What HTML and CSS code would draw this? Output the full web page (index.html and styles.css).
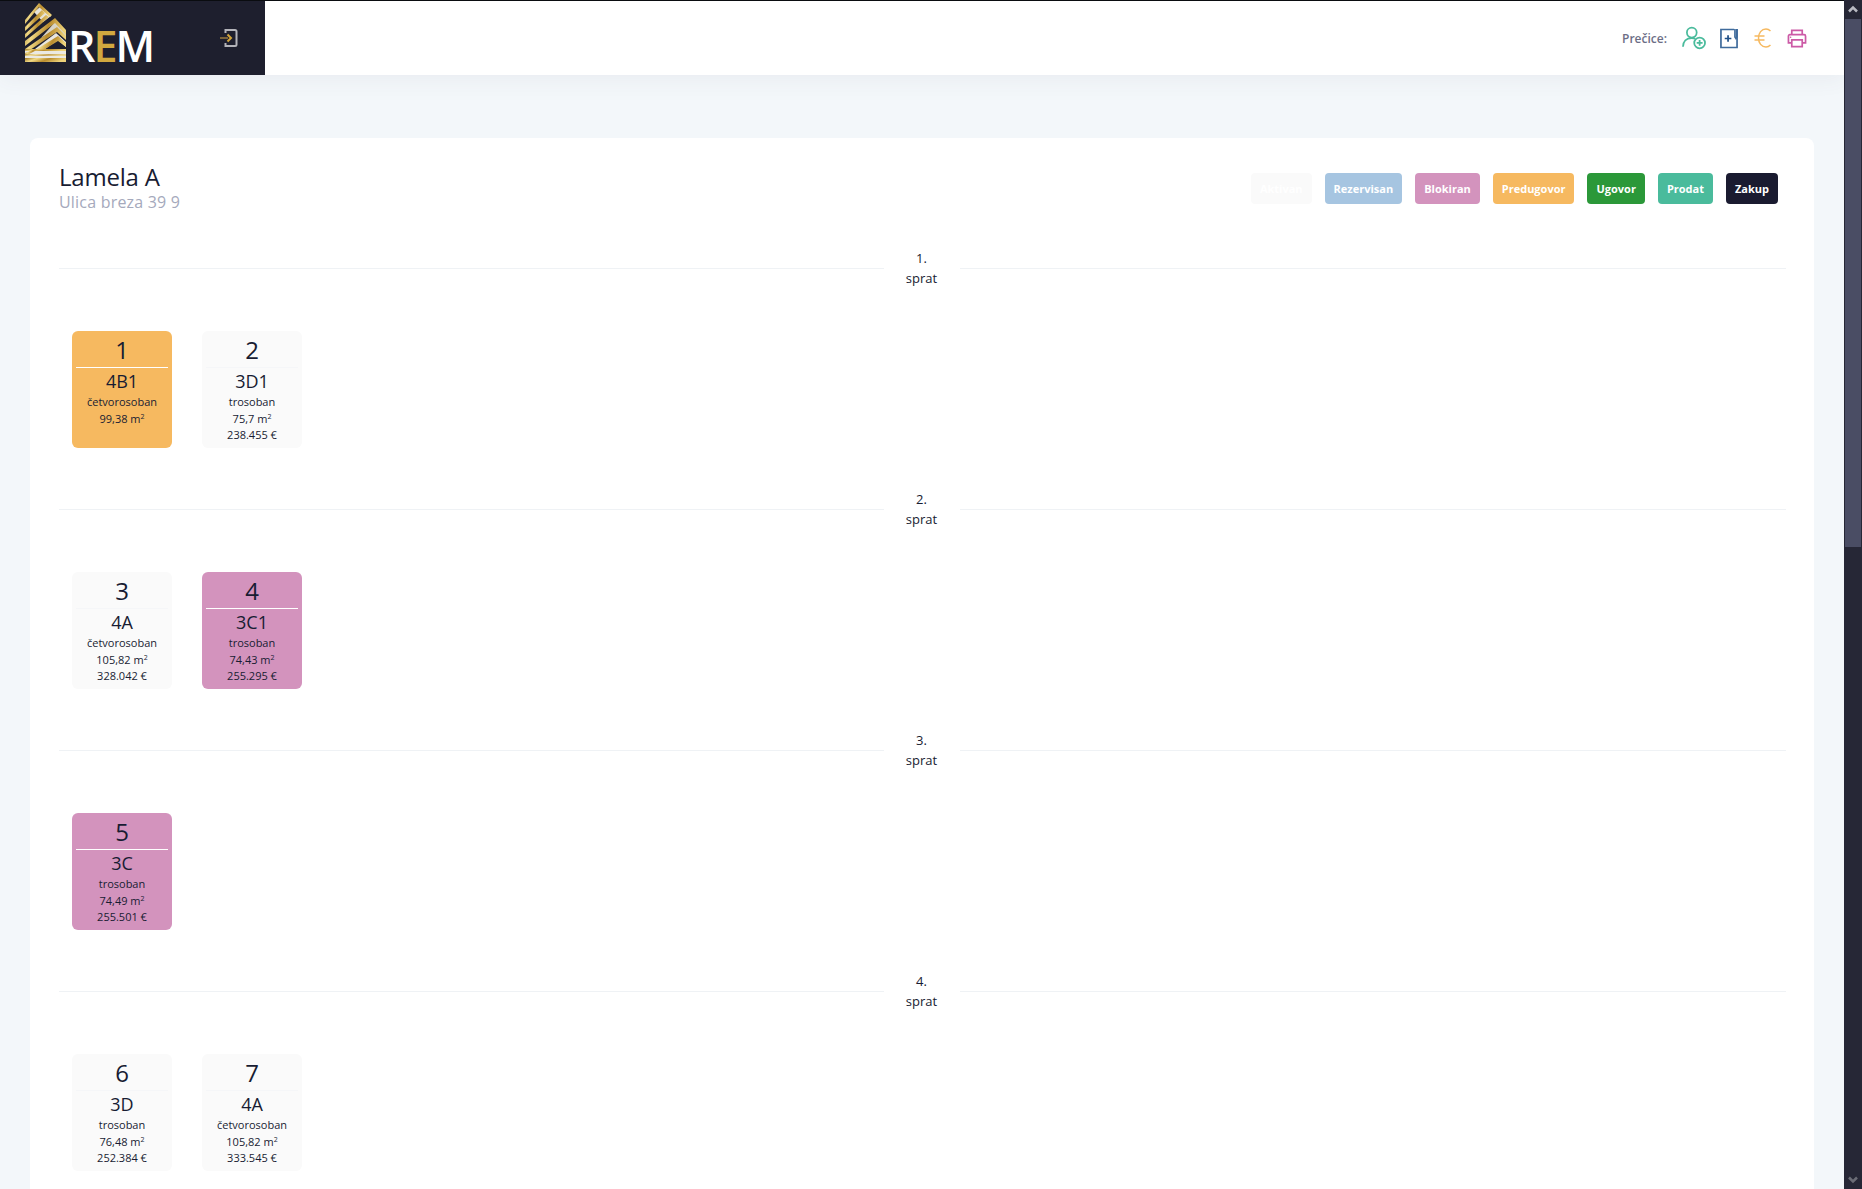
FILE: index.html
```html
<!DOCTYPE html>
<html lang="sr">
<head>
<meta charset="utf-8">
<title>REM</title>
<link rel="stylesheet" href="styles.css">
</head>
<body>
<div class="app">
  <div class="page">
    <header class="topbar">
      <div class="brand">
        <svg class="logo-mark" viewBox="0 0 41 59" width="41" height="59" aria-hidden="true">
          <defs>
            <linearGradient id="gold" x1="0" y1="0" x2="1" y2="0.25">
              <stop offset="0" stop-color="#9a7420"/>
              <stop offset="0.3" stop-color="#f2da86"/>
              <stop offset="0.6" stop-color="#b98c2e"/>
              <stop offset="1" stop-color="#eed27a"/>
            </linearGradient>
          </defs>
          <path d="M15 4 26 13 18 19 9 9z" fill="#e6e3da"/>
          <path d="M30 19 41 30v6L31 26 16 35z" fill="#d8d4c6"/>
          <path d="M31 30 41 39v5L33 37 20 46H10z" fill="#e9e7e0"/>
          <path d="M0 48H41V55H0z" fill="#ebe9e3"/>
          <g fill="url(#gold)">
            <path d="M0 17 14 0 27 12 25 14 14 4 0 21z"/>
            <path d="M0 24 17 7 20 10 0 28z"/>
            <path d="M0 31 21 12 24 14 0 35z"/>
            <path d="M0 38 30 15 41 27V32L30 20 0 43z"/>
            <path d="M0 46 32 24 41 33V37L32 29 5 47H0z"/>
            <path d="M12 46 33 33 41 40V44L33 38 20 46z"/>
            <path d="M0 46H41V48H0z"/>
            <path d="M0 50 10 46H14L0 53z"/>
            <path d="M0 51H41V53H0z" opacity=".75"/>
            <path d="M0 55H41V59H0z"/>
          </g>
        </svg>
        <div class="wordmark">R<span class="wordmark-gold">E</span>M</div>
        <svg class="login-icon" viewBox="0 0 18 18" width="18" height="18" aria-hidden="true">
          <path d="M5.500 4V1H15a1.500 1.500 0 0 1 1.500 1.500v13A1.500 1.500 0 0 1 15 17H5.500v-3" fill="none" stroke="#b4b4ba" stroke-width="2"/>
          <path d="M0 9h8" fill="none" stroke="#7b6238" stroke-width="2"/>
          <path d="M7.500 5.500 11 9 7.500 12.500" fill="none" stroke="#d4a53a" stroke-width="2"/>
        </svg>
      </div>
      <div class="shortcuts">
        <span class="shortcuts-label">Prečice:</span>
        <svg class="shortcut sc-user" viewBox="0 0 24.500 24" width="24" height="24" aria-hidden="true">
          <g fill="none" stroke="#4abb9c" stroke-width="1.800">
            <circle cx="10" cy="6.500" r="5"/>
            <path d="M1 21c0-5.500 3.500-9 9-9 1.500 0 2.500.3 3.500.8"/>
            <circle cx="18" cy="17" r="5.500"/>
            <path d="M18 14v6M15 17h6"/>
          </g>
        </svg>
        <svg class="shortcut sc-note" viewBox="0 0 19 22" width="18" height="21" aria-hidden="true">
          <g fill="none" stroke="#3f6b9c" stroke-width="1.800">
            <path d="M15 1.500H1v19h17V1"/>
            <path d="M15.800 1v8.500l1 1.500 1-1.500V1"/>
          </g>
          <path d="M8.500 7.500v7M5 11h7" fill="none" stroke="#1f4f86" stroke-width="1.800"/>
        </svg>
        <svg class="shortcut sc-euro" viewBox="0 0 17 20" width="17" height="20" aria-hidden="true">
          <g fill="none" stroke="#f6b960" stroke-width="1.500">
            <path d="M16.500 3C15 1.500 13.500 1 12 1 7.500 1 4.500 5 4.500 10s3 9 7.500 9c1.500 0 3-.5 4.500-2"/>
            <path d="M0.500 8h10M0.500 12h10"/>
          </g>
        </svg>
        <svg class="shortcut" viewBox="0 0 21 20" width="20" height="19" aria-hidden="true">
          <g fill="none" stroke="#cc5aa6" stroke-width="1.800">
            <path d="M5 6V1.500h11V6"/>
            <path d="M5 14.500H1.500V7.500a1.500 1.500 0 0 1 1.500-1.500h15a1.500 1.500 0 0 1 1.500 1.500v7H16"/>
            <path d="M5 11.500h11v7H5z"/>
          </g>
          <circle cx="3.800" cy="8.800" r=".8" fill="#cc5aa6"/>
        </svg>
      </div>
    </header>

    <main class="content">
      <section class="panel">
        <div class="panel-head">
          <div class="panel-title">
            <h1>Lamela A</h1>
            <p>Ulica breza 39 9</p>
          </div>
          <div class="legend">
            <span class="tag s-active">Aktivan</span>
            <span class="tag s-reserved">Rezervisan</span>
            <span class="tag s-blocked">Blokiran</span>
            <span class="tag s-pre">Predugovor</span>
            <span class="tag s-contract">Ugovor</span>
            <span class="tag s-sold">Prodat</span>
            <span class="tag s-lease">Zakup</span>
          </div>
        </div>

        <div class="floor">
          <div class="floor-sep"><span>1. sprat</span></div>
          <div class="units">
            <div class="unit s-pre"><div class="unit-no">1</div><div class="unit-code">4B1</div><div class="unit-line">četvorosoban</div><div class="unit-line">99,38 m<sup>2</sup></div></div>
            <div class="unit s-active"><div class="unit-no">2</div><div class="unit-code">3D1</div><div class="unit-line">trosoban</div><div class="unit-line">75,7 m<sup>2</sup></div><div class="unit-line">238.455 €</div></div>
          </div>
        </div>

        <div class="floor">
          <div class="floor-sep"><span>2. sprat</span></div>
          <div class="units">
            <div class="unit s-active"><div class="unit-no">3</div><div class="unit-code">4A</div><div class="unit-line">četvorosoban</div><div class="unit-line">105,82 m<sup>2</sup></div><div class="unit-line">328.042 €</div></div>
            <div class="unit s-blocked"><div class="unit-no">4</div><div class="unit-code">3C1</div><div class="unit-line">trosoban</div><div class="unit-line">74,43 m<sup>2</sup></div><div class="unit-line">255.295 €</div></div>
          </div>
        </div>

        <div class="floor">
          <div class="floor-sep"><span>3. sprat</span></div>
          <div class="units">
            <div class="unit s-blocked"><div class="unit-no">5</div><div class="unit-code">3C</div><div class="unit-line">trosoban</div><div class="unit-line">74,49 m<sup>2</sup></div><div class="unit-line">255.501 €</div></div>
          </div>
        </div>

        <div class="floor">
          <div class="floor-sep"><span>4. sprat</span></div>
          <div class="units">
            <div class="unit s-active"><div class="unit-no">6</div><div class="unit-code">3D</div><div class="unit-line">trosoban</div><div class="unit-line">76,48 m<sup>2</sup></div><div class="unit-line">252.384 €</div></div>
            <div class="unit s-active"><div class="unit-no">7</div><div class="unit-code">4A</div><div class="unit-line">četvorosoban</div><div class="unit-line">105,82 m<sup>2</sup></div><div class="unit-line">333.545 €</div></div>
          </div>
        </div>
      </section>
    </main>
  </div>

  <aside class="scrollbar" aria-hidden="true">
    <svg class="scroll-arrow" viewBox="0 0 18 19" width="18" height="19"><path d="M5 11.500 9 7.500l4 4" fill="none" stroke="#b9bac2" stroke-width="2.500"/></svg>
    <div class="scroll-track"><div class="scroll-thumb"></div></div>
    <svg class="scroll-arrow" viewBox="0 0 18 19" width="18" height="19"><path d="M5 7.500 9 11.500l4-4" fill="none" stroke="#6b6c76" stroke-width="2.500"/></svg>
  </aside>
</div>
</body>
</html>
```

FILE: styles.css
```css
* { box-sizing: border-box; }

html, body {
  margin: 0;
  height: 100%;
  overflow: hidden;
}

body {
  font-family: "Open Sans", "Liberation Sans", sans-serif;
  font-size: 13px;
  color: #181c32;
  background: #f3f7fa;
}

.app {
  display: flex;
  height: 100vh;
}

.page {
  flex: 1;
  min-width: 0;
  overflow: hidden;
  border-top: 1px solid #0a0c10;
}

/* top bar */
.topbar {
  display: flex;
  justify-content: space-between;
  align-items: center;
  height: 74px;
  background: #fff;
  box-shadow: 0 5px 20px rgba(82, 63, 105, 0.06);
}

.brand {
  display: flex;
  align-items: center;
  width: 265px;
  height: 100%;
  padding-left: 25px;
  background: #1e1f2e;
}

.logo-mark {
  flex: none;
  align-self: flex-start;
  margin-top: 2px;
}

.wordmark {
  margin: 14px 0 0 2px;
  font-size: 43px;
  font-weight: 600;
  line-height: 1;
  letter-spacing: -2px;
  color: #fff;
}

.wordmark-gold { color: #d2a83f; }

.login-icon {
  margin-left: 67px;
  flex: none;
}

.shortcuts {
  display: flex;
  align-items: center;
  padding-right: 37px;
}

.shortcuts-label {
  margin-right: 15px;
  font-size: 12px;
  font-weight: 600;
  color: #6c6e86;
}

.shortcut { flex: none; }
.sc-user { margin-right: 14px; }
.sc-note { margin-right: 16px; }
.sc-euro { margin-right: 16px; }

/* content */
.content {
  padding: 63px 30px 0;
}

.panel {
  padding: 24px 28px 0 29px;
  background: #fff;
  border-radius: 8px;
}

.panel-head {
  display: flex;
  justify-content: space-between;
  align-items: flex-start;
  height: 86px;
  padding-right: 8px;
}

.panel-title h1 {
  margin: 0;
  font-size: 24px;
  font-weight: 500;
  line-height: 29px;
  letter-spacing: -0.200px;
  color: #181c32;
}

.panel-title p {
  margin: 2px 0 0;
  font-size: 16px;
  font-weight: 500;
  line-height: 19px;
  letter-spacing: 0.200px;
  color: #a5a9bc;
}

.legend {
  display: flex;
  gap: 13px;
  margin-top: 11px;
}

.tag {
  padding: 0 9px;
  font-size: 11px;
  font-weight: 700;
  line-height: 31px;
  color: #fff;
  border-radius: 4px;
}

.s-active { background: #fafafa; }
.s-reserved { background: #a6c5e1; }
.s-blocked { background: #d393bd; }
.s-pre { background: #f6b960; }
.s-contract { background: #2b9839; }
.s-sold { background: #4abb9c; }
.s-lease { background: #1a1b30; }

/* floors */
.floor {
  height: 241px;
}

.floor-sep {
  display: flex;
  align-items: center;
  height: 40px;
  text-align: center;
  line-height: 20px;
}

.floor-sep::before,
.floor-sep::after {
  content: "";
  border-top: 1px solid #eff2f5;
}

.floor-sep::before { flex: 0 0 calc(50% - 39px); }
.floor-sep::after { flex: 1; }

.floor-sep span {
  flex: none;
  width: 76px;
  padding: 0 20px;
  font-size: 13px;
  color: #181c32;
}

.units {
  display: flex;
  gap: 30px;
  padding: 43px 0 0 13px;
}

.unit {
  width: 100px;
  height: 117px;
  padding: 4px 4px 0;
  text-align: center;
  border-radius: 6px;
}

.unit-no {
  height: 33px;
  font-size: 24px;
  line-height: 30px;
  border-bottom: 1px solid #fff;
}

.s-active .unit-no { border-bottom-color: #f5f6f8; }

.unit-code {
  height: 26px;
  font-size: 18px;
  font-weight: 500;
  line-height: 27px;
}

.unit-line {
  font-size: 11px;
  line-height: 16.500px;
}

.unit-line sup {
  font-size: 7px;
  line-height: 0;
  vertical-align: 4px;
}

/* painted scrollbar */
.scrollbar {
  display: flex;
  flex-direction: column;
  flex: none;
  width: 18px;
  background: #262736;
}

.scroll-arrow { flex: none; }

.scroll-track {
  flex: 1;
  min-height: 0;
}

.scroll-thumb {
  height: 528px;
  margin: 0 1px;
  background: #4a4d64;
}
```
